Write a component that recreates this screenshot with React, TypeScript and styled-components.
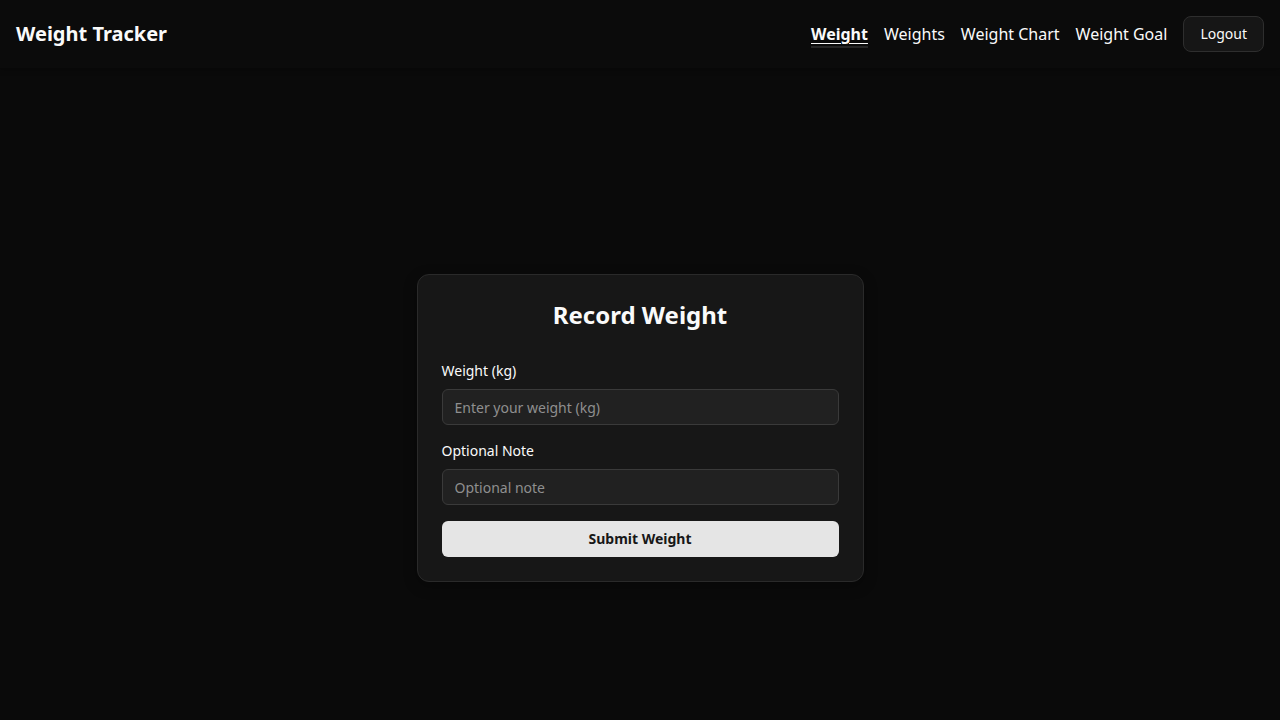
import React from "react";
import styled, { createGlobalStyle } from "styled-components";

const Global = createGlobalStyle`
  * { box-sizing: border-box; }
  html, body { margin: 0; padding: 0; background: #0a0a0a; }
  body { font-family: "Noto Sans", "Open Sans", sans-serif; color: #fafafa; }
`;

const Header = styled.header`
  display: flex;
  align-items: center;
  justify-content: space-between;
  height: 68px;
  padding: 0 16px;
  background: #0b0b0b;
  box-shadow: 0 1px 6px rgba(0, 0, 0, 0.35);
`;

const Brand = styled.div`
  font-size: 20px;
  font-weight: 700;
  line-height: 28px;
  color: #fafafa;
`;

const Nav = styled.nav`
  display: flex;
  align-items: center;
  gap: 16px;
`;

const NavLink = styled.a<{ $active?: boolean }>`
  font-size: 16px;
  line-height: 24px;
  color: #fafafa;
  text-decoration: ${(p) => (p.$active ? "underline" : "none")};
  text-underline-offset: 3px;
  font-weight: ${(p) => (p.$active ? 700 : 400)};
  border-bottom: 2px solid ${(p) => (p.$active ? "#262626" : "transparent")};
  padding-top: 2px;
  cursor: pointer;
`;

const LogoutButton = styled.button`
  height: 36px;
  padding: 0 16px 1px;
  border-radius: 8px;
  border: 1px solid #2e2e2e;
  background: #161616;
  color: #fafafa;
  font-family: inherit;
  font-size: 14px;
  line-height: 20px;
`;

const Main = styled.main`
  min-height: 100vh;
  display: flex;
  align-items: center;
  justify-content: center;
`;

const Card = styled.div`
  width: 447px;
  padding: 24px;
  background: #171717;
  border: 1px solid #2a2a2a;
  border-radius: 12px;
  box-shadow: 0 4px 14px rgba(0, 0, 0, 0.3);
`;

const Title = styled.h2`
  margin: 0 0 30px;
  text-align: center;
  font-size: 24px;
  line-height: 32px;
  font-weight: 700;
`;

const Form = styled.form`
  display: flex;
  flex-direction: column;
  gap: 16px;
`;

const Field = styled.div`
  display: flex;
  flex-direction: column;
  gap: 8px;
`;

const Label = styled.label`
  font-size: 14px;
  line-height: 20px;
  color: #fafafa;
`;

const Input = styled.input`
  height: 36px;
  padding: 0 12px;
  border-radius: 6px;
  border: 1px solid #3a3a3a;
  background: #212121;
  color: #fafafa;
  font-family: inherit;
  font-size: 14px;
  outline: none;
  &::placeholder { color: #8f8f8f; }
`;

const Submit = styled.button`
  height: 36px;
  padding: 0 0 1px;
  border: none;
  border-radius: 6px;
  background: #e5e5e5;
  color: #171717;
  font-family: inherit;
  font-size: 14px;
  line-height: 20px;
  font-weight: 700;
`;

export default function App() {
  return (
    <>
      <Global />
      <Header>
        <Brand>Weight Tracker</Brand>
        <Nav>
          <NavLink $active>Weight</NavLink>
          <NavLink>Weights</NavLink>
          <NavLink>Weight Chart</NavLink>
          <NavLink>Weight Goal</NavLink>
          <LogoutButton>Logout</LogoutButton>
        </Nav>
      </Header>
      <Main>
        <Card>
          <Title>Record Weight</Title>
          <Form onSubmit={(e) => e.preventDefault()}>
            <Field>
              <Label>Weight (kg)</Label>
              <Input placeholder="Enter your weight (kg)" />
            </Field>
            <Field>
              <Label>Optional Note</Label>
              <Input placeholder="Optional note" />
            </Field>
            <Submit type="submit">Submit Weight</Submit>
          </Form>
        </Card>
      </Main>
    </>
  );
}
